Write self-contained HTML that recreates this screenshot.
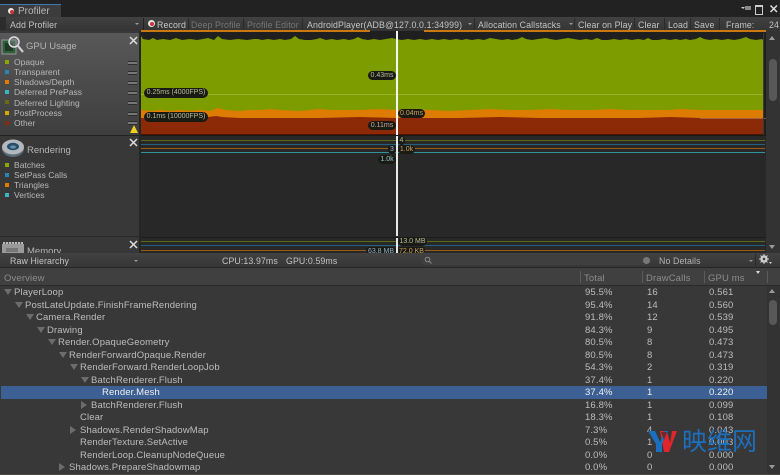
<!DOCTYPE html>
<html><head><meta charset="utf-8">
<style>
html,body{margin:0;padding:0;background:#383838}
#r{position:relative;width:780px;height:475px;overflow:hidden;background:#383838;font-family:"Liberation Sans","Noto Sans CJK SC",sans-serif;font-size:9.5px;letter-spacing:.13px;color:#bdbdbd;filter:blur(.3px)}
#r div,#r span.a{position:absolute;white-space:nowrap}
.b{position:absolute}
.t{line-height:12px;height:12px;font-size:8.8px;letter-spacing:.1px}
.h{font-size:9.5px;letter-spacing:.13px}
.sep{width:1px;background:#2a2a2a;top:18px;height:12px}
.sw{left:5px;width:4px;height:4px}
.lg{left:14px;line-height:10px;font-size:8.5px;letter-spacing:.03px;color:#b8b8b8}
.ln{left:128px;width:9px;height:2px;border-top:1px solid #2c2c2c;border-bottom:1px solid #2c2c2c;background:#777}
.p{background:#1a1a14;border-radius:5px;height:9px;line-height:9px;font-size:7px;letter-spacing:0;text-align:center;color:#b9bd9c}
.row{left:1px;width:766px;height:12.5px;line-height:14px;color:#bdbdbd}
.n{position:absolute;top:0}
.c1,.c2,.c3{position:absolute;top:0}
.c1{left:584px}.c2{left:646px}.c3{left:708px}
.tri{position:absolute;top:3px;width:0;height:0;border-left:4px solid transparent;border-right:4px solid transparent;border-top:6px solid #6c6c6c}
.trr{position:absolute;top:2px;width:0;height:0;border-top:4px solid transparent;border-bottom:4px solid transparent;border-left:6px solid #6c6c6c}
.hl{height:1px;left:141px;width:624px}
.ttl{font-size:9.5px;letter-spacing:0;color:#b4b4b4}
</style></head><body>
<div id="r">
<!-- title bar -->
<div style="left:0;top:0;width:780px;height:17px;background:#222"></div>
<div style="left:0;top:4px;width:61px;height:13px;background:#3c3c3c"></div>
<div style="left:0;top:4px;width:61px;height:1px;background:#3a7ab8"></div>
<div style="left:8px;top:8px;width:6px;height:6px;border-radius:50%;background:#eee"></div>
<div style="left:10px;top:10px;width:4px;height:4px;border-radius:50%;background:#c33"></div>
<div class="t" style="left:18px;top:6px;font-size:10px;letter-spacing:0;color:#b8b8b8">Profiler</div>
<div style="left:741px;top:7px;width:0;height:0;border-left:2px solid transparent;border-right:2px solid transparent;border-top:2px solid #ccc"></div>
<div style="left:745px;top:6px;width:6px;height:4px;background:#888"></div>
<div style="left:755px;top:5px;width:6px;height:7px;border:1px solid #ccc;border-top:2px solid #ccc"></div>
<svg class="b" style="left:769px;top:4px" width="10" height="10"><path d="M1.5 1.5L8 8M8 1.5L1.5 8" stroke="#ddd" stroke-width="1.5"/></svg>

<!-- main toolbar -->
<div style="left:0;top:17px;width:780px;height:14px;background:linear-gradient(#414141,#343434)"></div>
<div style="left:0;top:17px;width:6px;height:13px;background:#2c2c2c"></div>
<div class="t" style="left:10px;top:18.500px;color:#c4c4c4">Add Profiler</div>
<div style="left:135px;top:23px;width:0;height:0;border-left:2px solid transparent;border-right:2px solid transparent;border-top:2px solid #999"></div>
<div class="sep" style="left:143px;background:#222"></div>
<div style="left:148px;top:20px;width:7px;height:7px;border-radius:50%;background:#e6e6e6"></div>
<div style="left:150px;top:22px;width:4px;height:4px;border-radius:50%;background:#c33"></div>
<div class="t" style="left:157px;top:18.500px;color:#c8c8c8">Record</div>
<div class="sep" style="left:188px"></div>
<div class="t" style="left:191px;top:18.500px;color:#777">Deep Profile</div>
<div class="sep" style="left:243px"></div>
<div class="t" style="left:247px;top:18.500px;color:#777">Profile Editor</div>
<div class="sep" style="left:302px"></div>
<div class="t" style="left:307px;top:18.500px;color:#c4c4c4">AndroidPlayer(ADB@127.0.0.1:34999)</div>
<div style="left:468px;top:23px;width:0;height:0;border-left:2px solid transparent;border-right:2px solid transparent;border-top:2px solid #999"></div>
<div class="sep" style="left:474px"></div>
<div class="t" style="left:478px;top:18.500px;color:#c4c4c4">Allocation Callstacks</div>
<div style="left:569px;top:23px;width:0;height:0;border-left:2px solid transparent;border-right:2px solid transparent;border-top:2px solid #999"></div>
<div class="sep" style="left:574px"></div>
<div class="t" style="left:578px;top:18.500px;color:#c4c4c4">Clear on Play</div>
<div class="sep" style="left:634px"></div>
<div class="t" style="left:638px;top:18.500px;color:#c4c4c4">Clear</div>
<div class="sep" style="left:664px"></div>
<div class="t" style="left:668px;top:18.500px;color:#c4c4c4">Load</div>
<div class="sep" style="left:690px"></div>
<div class="t" style="left:694px;top:18.500px;color:#c4c4c4">Save</div>
<div class="sep" style="left:719px"></div>
<div class="t" style="left:726px;top:18.500px;color:#c4c4c4">Frame:</div>
<div class="t" style="left:769px;top:18.500px;color:#c4c4c4">24</div>

<!-- left panels -->
<div style="left:0;top:33px;width:140px;height:102px;background:linear-gradient(#585858,#3e3e3e)"></div>
<div style="left:0;top:135px;width:140px;height:1px;background:#222"></div>
<div style="left:0;top:136px;width:140px;height:101px;background:#383838"></div>
<div style="left:0;top:236px;width:140px;height:1px;background:#2a2a2a"></div>
<div style="left:0;top:237px;width:140px;height:17px;background:#383838"></div>
<div style="left:139px;top:31px;width:2px;height:222px;background:#252525"></div>

<!-- GPU icon -->
<svg class="b" style="left:1px;top:35px" width="24" height="21"><rect x="1" y="5" width="14" height="14" fill="#2f5f3a" stroke="#999" stroke-width="1"/><rect x="4" y="8" width="8" height="8" fill="#1e3a26"/><circle cx="13" cy="7" r="5" fill="#889" fill-opacity=".4" stroke="#ddd" stroke-width="1.5"/><path d="M17 11L22 17" stroke="#ccc" stroke-width="2.2"/></svg>
<div class="t ttl" style="left:26px;top:41px">GPU Usage</div>
<svg class="b" style="left:129px;top:36px" width="9" height="9"><path d="M1 1L8 8M8 1L1 8" stroke="#ddd" stroke-width="1.5"/></svg>

<div class="sw" style="top:60px;background:#8aa800"></div><div class="lg" style="top:57px">Opaque</div><div class="ln" style="top:61px"></div>
<div class="sw" style="top:70px;background:#2a86b0"></div><div class="lg" style="top:67px">Transparent</div><div class="ln" style="top:71px"></div>
<div class="sw" style="top:80px;background:#e07c00"></div><div class="lg" style="top:77px">Shadows/Depth</div><div class="ln" style="top:81px"></div>
<div class="sw" style="top:90px;background:#3cb4bc"></div><div class="lg" style="top:87px">Deferred PrePass</div><div class="ln" style="top:91px"></div>
<div class="sw" style="top:100px;background:#6b6b10"></div><div class="lg" style="top:98px">Deferred Lighting</div><div class="ln" style="top:101px"></div>
<div class="sw" style="top:111px;background:#d8a800"></div><div class="lg" style="top:108px">PostProcess</div><div class="ln" style="top:112px"></div>
<div class="sw" style="top:121px;background:#8c2a08"></div><div class="lg" style="top:118px">Other</div><div class="ln" style="top:121px"></div>
<svg class="b" style="left:130px;top:125px" width="8" height="8"><path d="M4 0L8 8H0Z" fill="#f0d020"/></svg>

<!-- Rendering icon -->
<svg class="b" style="left:1px;top:138px" width="24" height="20"><ellipse cx="12" cy="11" rx="11" ry="8" fill="#5a6a78"/><ellipse cx="12" cy="9" rx="11" ry="7.5" fill="#b4b8bc"/><ellipse cx="12" cy="8.5" rx="6" ry="3.8" fill="#24506e"/><ellipse cx="12" cy="9" rx="3" ry="1.6" fill="#6c8ea6"/></svg>
<div class="t ttl" style="left:27px;top:144.500px">Rendering</div>
<svg class="b" style="left:129px;top:138px" width="9" height="9"><path d="M1 1L8 8M8 1L1 8" stroke="#ddd" stroke-width="1.5"/></svg>
<div class="sw" style="top:163px;background:#8aa800"></div><div class="lg" style="top:160px">Batches</div>
<div class="sw" style="top:173px;background:#2a86b0"></div><div class="lg" style="top:170px">SetPass Calls</div>
<div class="sw" style="top:183px;background:#e07c00"></div><div class="lg" style="top:180px">Triangles</div>
<div class="sw" style="top:193px;background:#3cb4bc"></div><div class="lg" style="top:190px">Vertices</div>

<!-- Memory icon -->
<div style="left:2px;top:244px;width:22px;height:9px;background:#9a9a9a"></div>
<div style="left:3px;top:242px;width:20px;height:2px;background:repeating-linear-gradient(90deg,#bbb 0 2px,#555 2px 3px)"></div>
<div style="left:6px;top:248px;width:12px;height:4px;background:#777"></div>
<div class="t ttl" style="left:27px;top:246px;height:8px;line-height:12px;overflow:hidden">Memory</div>
<svg class="b" style="left:129px;top:240px" width="9" height="9"><path d="M1 1L8 8M8 1L1 8" stroke="#ddd" stroke-width="1.5"/></svg>

<!-- chart backgrounds -->
<div style="left:141px;top:31px;width:625px;height:104px;background:#1f1f1f"></div>
<div style="left:141px;top:135px;width:625px;height:1px;background:#1a1a1a"></div>
<div style="left:141px;top:136px;width:625px;height:101px;background:#282828"></div>
<div style="left:141px;top:237px;width:625px;height:1px;background:#1c1c1c"></div>
<div style="left:141px;top:238px;width:625px;height:16px;background:#282828"></div>

<div style="left:141px;top:30px;width:229px;height:2px;background:#c87a10"></div>
<div style="left:424px;top:30px;width:342px;height:2px;background:#c87a10"></div>

<svg class="b" style="left:0;top:0" width="780" height="140">
<path fill="#7c9c00" d="M141 134V36L143 39 149 40 153 38 157 40 163 39 170 40 176 38 182 40 190 39 197 40 203 39 208 38 214 40 218 36 222 39 230 40 238 39 247 40 254 39 258 39 262 40 268 39 274 40 280 39 285 40 291 39 295 36 299 39 305 40 311 40 317 39 320 38 326 40 332 39 337 40 344 39 349 40 354 39 358 37 362 39 368 40 374 39 380 40 386 39 392 38 396 39 402 40 408 39 414 40 420 39 426 40 432 39 438 40 444 39 450 40 456 39 462 40 466 39 472 40 478 39 484 40 490 38 496 39 502 40 508 39 512 40 518 39 522 37 526 39 532 40 538 39 546 38 550 39 556 40 562 39 568 38 574 39 580 40 586 39 592 40 597 38 602 40 608 40 614 39 620 40 626 39 632 40 638 39 644 40 648 38 652 40 658 40 664 39 670 40 676 39 680 40 686 39 690 40 696 39 700 37 704 39 710 40 716 39 722 40 728 39 734 40 740 39 746 37 750 39 756 40 762 39 763 40V134Z"/>
<path fill="#dd7c00" d="M141 134V110L150 111 160 110 170 111 180 110 190 111 200 110 210 111 218 108 226 110 240 111 250 110 262 110 270 109 280 110 300 111 310 110 320 109 330 110 345 110 360 110 380 109 396 110 410 109 430 110 450 111 470 110 490 109 510 110 530 110 550 109 570 110 590 110 610 109 630 110 650 110 670 110 680 109 700 110 720 110 740 110 763 110V134Z"/>
<path fill="#8c2a08" d="M141 134.500V118L170 118 200 118 216 116 222 117 240 118 260 118 280 118 320 118 360 117 396 118 420 118 460 118 500 117 540 118 580 118 640 118 670 117 700 118 763 118V134.500Z"/>
<path stroke="#a8bc40" stroke-width="1" fill="none" opacity=".7" d="M141 94.500H764"/>
<path stroke="#bf9a70" stroke-width="1" fill="none" opacity=".5" d="M700 118.500H766"/>
</svg>
<div style="left:141px;top:134px;width:622px;height:1px;background:#4a1500"></div>
<div style="left:763px;top:33px;width:1px;height:102px;background:#3a3a3a"></div>

<!-- lines -->
<div class="hl" style="top:140px;background:#5d6a12"></div>
<div class="hl" style="top:144px;background:#22617f"></div>
<div class="hl" style="top:148px;background:#9a5a10"></div>
<div class="hl" style="top:152px;background:#30929a"></div>
<div class="hl" style="top:241px;background:#5d6a12"></div>
<div class="hl" style="top:245px;background:#22617f"></div>
<div class="hl" style="top:250px;background:#9a5a10"></div>

<!-- cursor -->
<div style="left:395.500px;top:31px;width:2.500px;height:104px;background:#f4f4f4"></div>
<div style="left:395.500px;top:136px;width:2.500px;height:100px;background:#e8e8e8"></div>
<div style="left:395.500px;top:238px;width:2.500px;height:15px;background:#e8e8e8"></div>

<!-- pills -->
<div class="p" style="left:144px;top:88px;width:64px;height:10px;line-height:10px">0.25ms (4000FPS)</div>
<div class="p" style="left:144px;top:112px;width:64px;height:10px;line-height:10px">0.1ms (10000FPS)</div>
<div class="p" style="left:368px;top:71px;width:28px">0.43ms</div>
<div class="p" style="left:398px;top:108.500px;width:27px;color:#c8a060">0.04ms</div>
<div class="p" style="left:368px;top:121px;width:28px;color:#c8a898">0.11ms</div>
<div class="p" style="left:398px;top:136px;width:7px">4</div>
<div class="p" style="left:388px;top:145px;width:8px;color:#a0c0d0">3</div>
<div class="p" style="left:398px;top:145px;width:17px;color:#c8a060">1.0k</div>
<div class="p" style="left:378px;top:155px;width:18px;color:#90c8cc">1.0k</div>
<div class="p" style="left:398px;top:237px;width:29px">13.0 MB</div>
<div class="p" style="left:366px;top:247px;width:30px;color:#90b0c8;height:6px;overflow:hidden">63.8 MB</div>
<div class="p" style="left:398px;top:247px;width:27px;color:#c8a060;height:6px;overflow:hidden">72.0 KB</div>

<!-- chart scrollbar -->
<div style="left:766px;top:31px;width:14px;height:222px;background:#333"></div>
<div style="left:769px;top:36px;width:0;height:0;border-left:3px solid transparent;border-right:3px solid transparent;border-bottom:4px solid #999"></div>
<div style="left:769px;top:245px;width:0;height:0;border-left:3px solid transparent;border-right:3px solid transparent;border-top:4px solid #999"></div>
<div style="left:769px;top:59px;width:8px;height:42px;border-radius:4px;background:#585858"></div>

<!-- bottom toolbar -->
<div style="left:0;top:253px;width:780px;height:14px;background:linear-gradient(#424242,#363636)"></div>
<div style="left:0;top:267px;width:780px;height:1px;background:#262626"></div>
<div class="t" style="left:10px;top:254.500px;color:#c4c4c4">Raw Hierarchy</div>
<div style="left:134px;top:260px;width:0;height:0;border-left:2px solid transparent;border-right:2px solid transparent;border-top:2px solid #999"></div>
<div class="t" style="left:222px;top:254.500px;color:#c4c4c4">CPU:13.97ms</div>
<div class="t" style="left:286px;top:254.500px;color:#c4c4c4">GPU:0.59ms</div>
<div style="left:421px;top:255px;width:230px;height:10px;border-radius:5px;background:#3f3f3f"></div>
<svg class="b" style="left:424px;top:256px" width="8" height="8"><circle cx="3.500" cy="3.500" r="2.300" fill="none" stroke="#8a8a8a"/><path d="M5 5L7.500 7.500" stroke="#8a8a8a"/></svg>
<div style="left:643px;top:257px;width:7px;height:7px;border-radius:50%;background:#777"></div>
<div class="t" style="left:659px;top:254.500px;color:#b4b4b4">No Details</div>
<div style="left:749px;top:260px;width:0;height:0;border-left:2px solid transparent;border-right:2px solid transparent;border-top:2px solid #999"></div>
<div class="sep" style="left:755px;top:254px"></div>
<svg class="b" style="left:759px;top:254px" width="14" height="11"><circle cx="5" cy="5" r="2.700" fill="none" stroke="#ccc" stroke-width="2"/><path d="M5 0V10M0 5H10M1.500 1.500L8.500 8.500M8.500 1.500L1.500 8.500" stroke="#ccc" stroke-width="1"/><circle cx="5" cy="5" r="1.200" fill="#3a3a3a"/><path d="M10 8H13L11.500 10Z" fill="#ccc"/></svg>

<!-- table header -->
<div style="left:0;top:268px;width:780px;height:17px;background:#404040"></div>
<div style="left:0;top:285px;width:780px;height:1px;background:#2a2a2a"></div>
<div class="t h" style="left:4px;top:272.500px;color:#8c8c8c">Overview</div>
<div class="t h" style="left:584px;top:272.500px;color:#8c8c8c">Total</div>
<div class="t h" style="left:646px;top:272.500px;color:#8c8c8c">DrawCalls</div>
<div class="t h" style="left:708px;top:272.500px;color:#8c8c8c">GPU ms</div>
<div style="left:580px;top:271px;width:1px;height:12px;background:#5c5c5c"></div>
<div style="left:642px;top:271px;width:1px;height:12px;background:#5c5c5c"></div>
<div style="left:704px;top:271px;width:1px;height:12px;background:#5c5c5c"></div>
<div style="left:767px;top:271px;width:1px;height:12px;background:#5c5c5c"></div>
<div style="left:756px;top:271px;width:0;height:0;border-left:2px solid transparent;border-right:2px solid transparent;border-top:3px solid #ddd"></div>

<!-- rows -->
<div class="row" style="top:286px"><span class="tri" style="left:3px"></span><span class="n" style="left:13px">PlayerLoop</span><span class="c1">95.5%</span><span class="c2">16</span><span class="c3">0.561</span></div>
<div class="row" style="top:298.500px"><span class="tri" style="left:14px"></span><span class="n" style="left:24px">PostLateUpdate.FinishFrameRendering</span><span class="c1">95.4%</span><span class="c2">14</span><span class="c3">0.560</span></div>
<div class="row" style="top:311px"><span class="tri" style="left:25px"></span><span class="n" style="left:35px">Camera.Render</span><span class="c1">91.8%</span><span class="c2">12</span><span class="c3">0.539</span></div>
<div class="row" style="top:323.500px"><span class="tri" style="left:36px"></span><span class="n" style="left:46px">Drawing</span><span class="c1">84.3%</span><span class="c2">9</span><span class="c3">0.495</span></div>
<div class="row" style="top:336px"><span class="tri" style="left:47px"></span><span class="n" style="left:57px">Render.OpaqueGeometry</span><span class="c1">80.5%</span><span class="c2">8</span><span class="c3">0.473</span></div>
<div class="row" style="top:348.500px"><span class="tri" style="left:58px"></span><span class="n" style="left:68px">RenderForwardOpaque.Render</span><span class="c1">80.5%</span><span class="c2">8</span><span class="c3">0.473</span></div>
<div class="row" style="top:361px"><span class="tri" style="left:69px"></span><span class="n" style="left:79px">RenderForward.RenderLoopJob</span><span class="c1">54.3%</span><span class="c2">2</span><span class="c3">0.319</span></div>
<div class="row" style="top:373.500px"><span class="tri" style="left:80px"></span><span class="n" style="left:90px">BatchRenderer.Flush</span><span class="c1">37.4%</span><span class="c2">1</span><span class="c3">0.220</span></div>
<div class="row" style="top:386px;background:#3c6094;color:#f0f0f0"><span class="n" style="left:101px">Render.Mesh</span><span class="c1">37.4%</span><span class="c2">1</span><span class="c3">0.220</span></div>
<div class="row" style="top:398.500px"><span class="trr" style="left:80px"></span><span class="n" style="left:90px">BatchRenderer.Flush</span><span class="c1">16.8%</span><span class="c2">1</span><span class="c3">0.099</span></div>
<div class="row" style="top:411px"><span class="n" style="left:79px">Clear</span><span class="c1">18.3%</span><span class="c2">1</span><span class="c3">0.108</span></div>
<div class="row" style="top:423.500px"><span class="trr" style="left:69px"></span><span class="n" style="left:79px">Shadows.RenderShadowMap</span><span class="c1">7.3%</span><span class="c2">4</span><span class="c3">0.043</span></div>
<div class="row" style="top:436px"><span class="n" style="left:79px">RenderTexture.SetActive</span><span class="c1">0.5%</span><span class="c2">1</span><span class="c3">0.003</span></div>
<div class="row" style="top:448.500px"><span class="n" style="left:79px">RenderLoop.CleanupNodeQueue</span><span class="c1">0.0%</span><span class="c2">0</span><span class="c3">0.000</span></div>
<div class="row" style="top:461px"><span class="trr" style="left:58px"></span><span class="n" style="left:68px">Shadows.PrepareShadowmap</span><span class="c1">0.0%</span><span class="c2">0</span><span class="c3">0.000</span></div>

<!-- table scrollbar -->
<div style="left:767px;top:286px;width:13px;height:189px;background:#333"></div>
<div style="left:769px;top:289px;width:0;height:0;border-left:3px solid transparent;border-right:3px solid transparent;border-bottom:4px solid #999"></div>
<div style="left:769px;top:465px;width:0;height:0;border-left:3px solid transparent;border-right:3px solid transparent;border-top:4px solid #999"></div>
<div style="left:769px;top:300px;width:8px;height:25px;border-radius:4px;background:#585858"></div>

<!-- watermark -->
<svg class="b" style="left:647px;top:431px" width="32" height="22"><path d="M13 0H20L23 12 25 0H30L22 21H17Z" fill="#e0262c"/><path d="M1 0H8L13 11 17 0H21L15 13V21H9V13Z" fill="#1b6fbe"/><path d="M14 1H20L17 9Z" fill="#6a2a30"/></svg>
<div style="left:682px;top:428px;font-size:25px;letter-spacing:0;line-height:29px;color:#1b6fbe;font-family:'Liberation Sans','Noto Sans CJK SC',sans-serif">映维网</div>
<div style="left:0;top:474px;width:780px;height:1px;background:#4a4a40"></div>
</div>
</body></html>
